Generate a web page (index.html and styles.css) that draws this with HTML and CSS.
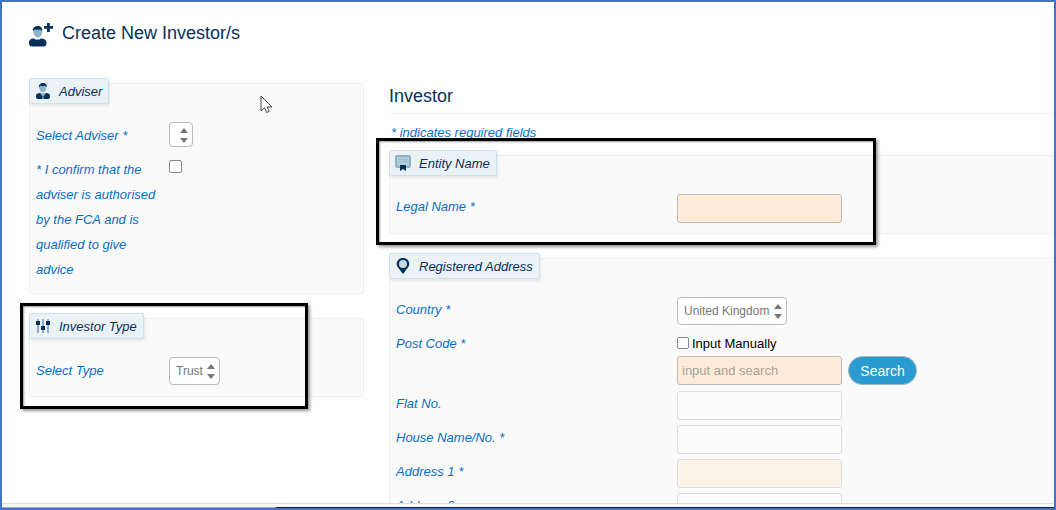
FILE: index.html
```html
<!DOCTYPE html>
<html lang="en">
<head>
<meta charset="utf-8">
<title>Create New Investor/s</title>
<link rel="stylesheet" href="styles.css">
</head>
<body>
<div class="frame">
  <main class="page">
    <header class="page-head">
      <svg class="head-icon" width="25" height="25" viewBox="0 0 25 25" aria-hidden="true">
        <path fill="#8fb3c6" d="M4.500 6h8.500v3c0 3-1.800 5.500-4.200 5.500S4.500 12 4.500 9z"/>
        <path fill="#07305a" d="M4 8.500C3.200 5 6 2.500 9 3c2.800-.2 4.800 2.300 4.300 5.500-.8-1-1.300-1.700-1.800-2-2 .7-4.500.2-6 .1-.6.400-.8 1.200-1.500 1.900zM18 0h2.800v3H24v2.800h-3.200V9H18V5.800h-3V3h3zM0 20c0-3.500 2-4.500 5-4.500 1.500 1.600 5.500 1.600 7 0 3.500 0 5.500 1.500 5.500 4.500 0 2.500-1 3.500-3 3.500H3c-2 0-3-1-3-3.500z"/>
      </svg>
      <h1 class="title">Create New Investor/s</h1>
    </header>

    <form class="columns">
      <div class="side">
        <section class="panel">
          <h3 class="tag">
            <svg width="16" height="18" viewBox="0 0 16 18" aria-hidden="true">
              <path fill="#8fb3c6" d="M4.500 4h6.500v2.500c0 2-1.300 3.500-3.200 3.500S4.500 8.500 4.500 6.500zM6 11h4l-1 5H7z"/>
              <path fill="#07305a" d="M4 5.500C3.500 2.500 5.500 1 8 1s4.300 1.500 3.700 4.500L10.500 3.800c-2 .6-3.500.4-5 0zM1 14c0-2.200 1.500-3 4.300-3L7.500 14.500V17H3c-1.500 0-2-.8-2-3zM15 14c0-2.200-1.500-3-4.300-3L8.500 14.500V17H13c1.500 0 2-.8 2-3z"/>
            </svg>
            Adviser
          </h3>
          <div class="row">
            <label class="label" for="adviser">Select Adviser *</label>
            <span class="picker">
              <select class="select small" id="adviser"><option></option></select>
              <svg class="arrows" width="8" height="15" viewBox="0 0 8 15" aria-hidden="true"><path fill="#777" d="M0 5l4-5 4 5zM0 10h8l-4 5z"/></svg>
            </span>
          </div>
          <div class="row confirm">
            <label class="label" for="confirm">* I confirm that the adviser is authorised by the FCA and is qualified to give advice</label>
            <input class="check" type="checkbox" id="confirm">
          </div>
        </section>

        <section class="panel">
          <h3 class="tag">
            <svg width="16" height="18" viewBox="0 0 16 18" aria-hidden="true">
              <path stroke="#8fb3c6" stroke-width="2" d="M3 2v14M8 2v14M13 2v14"/>
              <path fill="#07305a" d="M1 4h4v4H1zM6 9h4v4H6zM11 4h4v4h-4z"/>
            </svg>
            Investor Type
          </h3>
          <div class="row">
            <label class="label" for="type">Select Type</label>
            <span class="picker">
              <select class="select" id="type"><option>Trust</option></select>
              <svg class="arrows" width="8" height="15" viewBox="0 0 8 15" aria-hidden="true"><path fill="#777" d="M0 5l4-5 4 5zM0 10h8l-4 5z"/></svg>
            </span>
          </div>
          <div class="callout callout-type"></div>
        </section>
      </div>

      <div class="details">
        <h2 class="title subtitle">Investor</h2>
        <p class="note">* indicates required fields</p>

        <section class="panel open">
          <h3 class="tag">
            <svg width="16" height="18" viewBox="0 0 16 18" aria-hidden="true">
              <rect x="1" y="2" width="14" height="11" rx="1" fill="#b3cbd8" stroke="#8fb3c6" stroke-width="2"/>
              <path stroke="#9dbccc" d="M3 5.500h10M3 7.500h10"/>
              <path fill="#07305a" d="M5 11h6v6l-3-2-3 2z"/>
            </svg>
            Entity Name
          </h3>
          <div class="row">
            <label class="label" for="legal">Legal Name *</label>
            <input class="text required" type="text" id="legal">
          </div>
          <div class="callout callout-entity"></div>
        </section>

        <section class="panel open">
          <h3 class="tag">
            <svg width="16" height="18" viewBox="0 0 16 18" aria-hidden="true">
              <path fill="#07305a" d="M8 1c3.700 0 6.300 2.600 6.300 6 0 3-2.500 4.500-4.300 7.500L8 17l-2-2.500C4.200 11.500 1.700 10 1.700 7c0-3.400 2.600-6 6.300-6z"/>
              <circle cx="8" cy="7" r="4" fill="#c3d9e4"/>
            </svg>
            Registered Address
          </h3>
          <div class="row">
            <label class="label" for="country">Country *</label>
            <span class="picker">
              <select class="select" id="country"><option>United Kingdom</option></select>
              <svg class="arrows" width="8" height="15" viewBox="0 0 8 15" aria-hidden="true"><path fill="#777" d="M0 5l4-5 4 5zM0 10h8l-4 5z"/></svg>
            </span>
          </div>
          <div class="row">
            <label class="label" for="postcode">Post Code *</label>
            <div class="stack">
              <label class="manual"><input class="check" type="checkbox">Input Manually</label>
              <div class="lookup">
                <input class="text required" type="text" id="postcode" placeholder="input and search">
                <button class="search" type="button">Search</button>
              </div>
            </div>
          </div>
          <div class="row">
            <label class="label" for="flat">Flat No.</label>
            <input class="text off" type="text" id="flat" disabled>
          </div>
          <div class="row">
            <label class="label" for="house">House Name/No. *</label>
            <input class="text off" type="text" id="house" disabled>
          </div>
          <div class="row">
            <label class="label" for="address1">Address 1 *</label>
            <input class="text off required" type="text" id="address1" disabled>
          </div>
          <div class="row">
            <label class="label" for="address2">Address 2</label>
            <input class="text off" type="text" id="address2" disabled>
          </div>
        </section>
      </div>
    </form>

    <svg class="cursor" width="13" height="19" viewBox="0 0 13 19" aria-hidden="true">
      <path fill="#fff" stroke="#444" d="M1 1v15l3.500-3.200 2.200 4.700 2.500-1.100L7.100 12H12z"/>
    </svg>
  </main>
  <div class="taskbar"><span class="taskbar-light"></span><span class="taskbar-dark"></span></div>
</div>
</body>
</html>
```
FILE: styles.css
```css
* {
  box-sizing: border-box;
}

body {
  margin: 0;
  font: 13px "Liberation Sans", Arial, sans-serif;
  color: #000;
  background: #fff;
}

.frame {
  display: flex;
  flex-direction: column;
  height: 100vh;
  border: 2px solid #4472c4;
  overflow: hidden;
}

.page {
  position: relative;
  flex: 1;
  min-height: 0;
  padding: 20px 0 0 27px;
  overflow: hidden;
}

.page-head {
  display: flex;
  align-items: center;
  gap: 8px;
  height: 26px;
}

.title {
  margin: 0;
  font-size: 18px;
  font-weight: 400;
  line-height: 22px;
  color: #07305a;
}

.page-head .title {
  padding-bottom: 4px;
}

.columns {
  display: grid;
  grid-template-columns: 335fr 665fr;
  gap: 25px;
  padding-top: 35px;
}

.side {
  display: flex;
  flex-direction: column;
  gap: 24px;
}

.panel {
  position: relative;
  padding-bottom: 8px;
  border: 1px solid #eee;
  border-radius: 3px;
  background: #fafafa;
}

.open {
  margin-bottom: 24px;
  border-right: 0;
  border-radius: 3px 0 0 3px;
}

.tag {
  display: flex;
  align-items: center;
  gap: 8px;
  width: fit-content;
  height: 26px;
  margin: -6px 0 15px -1px;
  padding: 0 6px 0 5px;
  border: 1px solid #cfe2eb;
  border-radius: 2px;
  background: #eaf2f6;
  box-shadow: 1px 2px 3px #e6e6e6;
  font-size: 13px;
  font-style: italic;
  font-weight: 400;
  color: #07305a;
}

.row {
  display: grid;
  grid-template-columns: 133px 1fr;
  align-items: start;
  min-height: 34px;
  padding-left: 6px;
}

.open .row {
  grid-template-columns: 281px 1fr;
}

.label {
  padding-right: 12px;
  font-style: italic;
  line-height: 33px;
  color: #0a6ec4;
}

.open .label {
  line-height: 31px;
}

.confirm .label {
  padding: 4px 12px 3px 0;
  line-height: 25px;
}

.picker {
  position: relative;
  width: fit-content;
  margin-top: 3px;
}

.select {
  display: block;
  height: 28px;
  padding: 0 16px 0 6px;
  border: 1px solid #bbb;
  border-radius: 4px;
  appearance: none;
  background: #fff;
  font: 12px "Liberation Sans", Arial, sans-serif;
  color: #777;
}

.small {
  height: 25px;
}

.arrows {
  position: absolute;
  top: calc(50% - 7px);
  right: 5px;
  pointer-events: none;
}

.check {
  width: 13px;
  height: 13px;
  margin: 0;
  border: 1px solid #888;
  border-radius: 2px;
  appearance: none;
  background: #fff;
}

.check:checked {
  background: #2a9bd0;
}

.confirm .check {
  margin-top: 7px;
}

.text {
  width: 165px;
  height: 29px;
  margin: 3px 0 0;
  padding: 0 4px;
  border: 1px solid #bbb;
  border-radius: 3px;
  background: #fcfcfc;
  font: 13px "Liberation Sans", Arial, sans-serif;
}

.text::placeholder {
  color: #a5a29d;
}

.required {
  background: #feecd9;
}

.off {
  border-color: #ddd;
}

.off.required {
  background: #fdf3e9;
}

.stack {
  padding-bottom: 3px;
}

.manual {
  display: flex;
  align-items: center;
  gap: 3px;
  height: 25px;
  padding-top: 5px;
}

.manual .check {
  width: 12px;
  height: 12px;
}

.lookup {
  display: flex;
  gap: 6px;
}

.search {
  width: 69px;
  height: 29px;
  margin-top: 3px;
  padding: 0;
  border: 1px solid #a3b4bc;
  border-radius: 15px;
  background: #2a9bd0;
  font: 14px "Liberation Sans", Arial, sans-serif;
  color: #fff;
}

.subtitle {
  margin-top: 2px;
  padding-bottom: 6px;
  border-bottom: 1px solid #eee;
}

.note {
  margin: 10px 0 14px;
  padding-left: 2px;
  font-style: italic;
  line-height: 17px;
  color: #0a6ec4;
}

.callout {
  position: absolute;
  border: 3px solid #000;
  box-shadow: 2px 2px 3px #999, inset 1px 1px 2px #999;
  pointer-events: none;
}

.callout-type {
  inset: -16px 55px -13px -10px;
}

.callout-entity {
  inset: -18px 178px -12px -14px;
}

.cursor {
  position: absolute;
  top: 93px;
  left: 258px;
}

.taskbar {
  display: flex;
  height: 5px;
  border-top: 1px solid #ddd;
  background: #f7f8f7;
  align-items: flex-end;
}

.taskbar-light,
.taskbar-dark {
  width: 26%;
  height: 1px;
  background: #aaa;
}

.taskbar-dark {
  flex: 1;
  background: #10202c;
}
```
